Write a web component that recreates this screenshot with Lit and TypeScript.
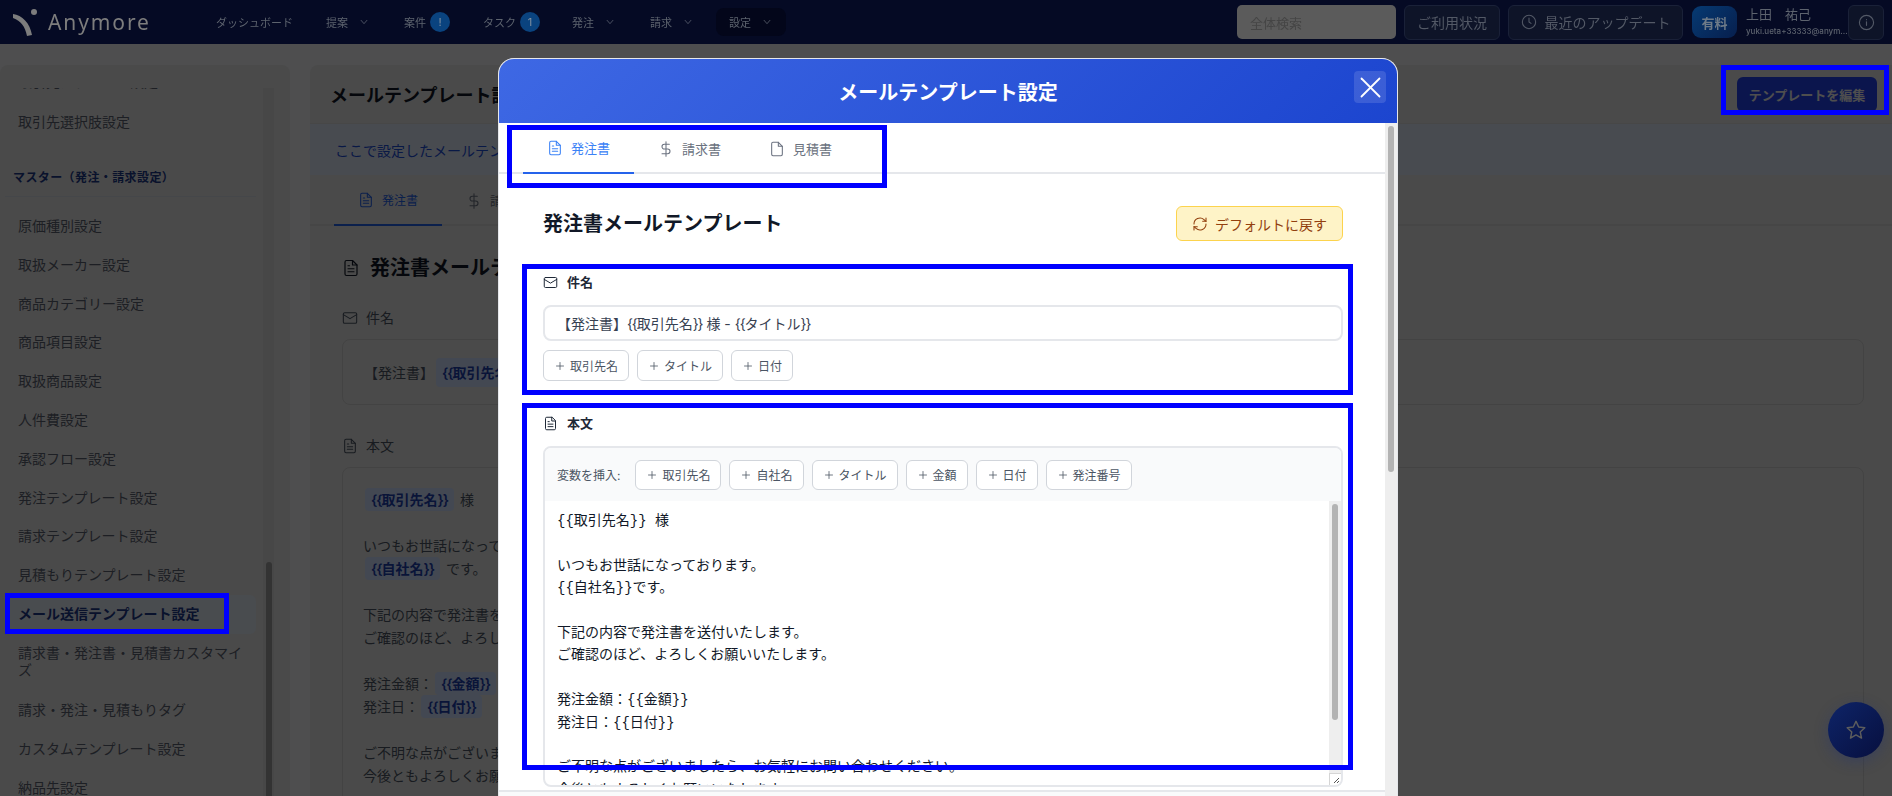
import { LitElement, html, css, svg } from "lit";
import { customElement } from "lit/decorators.js";

const ic = (size: number, body: unknown, cls = "") => html`<svg class=${cls} width=${size} height=${size} viewBox="0 0 24 24" fill="none" stroke="currentColor" stroke-width="1.6" stroke-linecap="round" stroke-linejoin="round">${body}</svg>`;
const fileText = svg`<path d="M14 2H6a2 2 0 0 0-2 2v16a2 2 0 0 0 2 2h12a2 2 0 0 0 2-2V8z"/><path d="M14 2v6h6"/><path d="M8 13h8"/><path d="M8 17h8"/><path d="M8 9h2"/>`;
const file = svg`<path d="M14 2H6a2 2 0 0 0-2 2v16a2 2 0 0 0 2 2h12a2 2 0 0 0 2-2V8z"/><path d="M14 2v6h6"/>`;
const dollar = svg`<path d="M12 1v22"/><path d="M17 5H9.5a3.5 3.5 0 0 0 0 7h5a3.5 3.5 0 0 1 0 7H6"/>`;
const mail = svg`<rect x="2" y="4" width="20" height="16" rx="2"/><path d="m22 7-10 6L2 7"/>`;
const plus = svg`<path d="M5 12h14"/><path d="M12 5v14"/>`;
const chevron = svg`<path d="m5 8 7 8 7-8"/>`;
const refresh = svg`<path d="M3 12a9 9 0 0 1 15-6.7L21 8"/><path d="M21 3v5h-5"/><path d="M21 12a9 9 0 0 1-15 6.7L3 16"/><path d="M8 16H3v5"/>`;
const x = svg`<path d="M4 4l16 16"/><path d="M20 4L4 20"/>`;
const clock = svg`<circle cx="12" cy="12" r="10"/><path d="M12 6v6l3 2"/>`;
const info = svg`<circle cx="12" cy="12" r="10"/><path d="M12 16v-5"/><path d="M12 8h.01"/>`;
const star = svg`<path d="M12 2.5l2.9 6.2 6.7.8-5 4.6 1.4 6.7-6-3.4-6 3.4 1.4-6.7-5-4.6 6.7-.8z"/>`;

const sideTop = ["原価種別設定", "取扱メーカー設定", "商品カテゴリー設定", "商品項目設定", "取扱商品設定", "人件費設定", "承認フロー設定", "発注テンプレート設定", "請求テンプレート設定", "見積もりテンプレート設定"];
const sideBottom = ["請求・発注・見積もりタグ", "カスタムテンプレート設定", "納品先設定"];
const subjectVars = ["取引先名", "タイトル", "日付"];
const bodyVars = ["取引先名", "自社名", "タイトル", "金額", "日付", "発注番号"];
const editorText = `{{取引先名}} 様

いつもお世話になっております。
{{自社名}}です。

下記の内容で発注書を送付いたします。
ご確認のほど、よろしくお願いいたします。

発注金額：{{金額}}
発注日：{{日付}}

ご不明な点がございましたら、お気軽にお問い合わせください。
今後ともよろしくお願いいたします。

{{自社名}}
`;

const v = (name: string) => html`<span class="br">{{</span>${name}<span class="br">}}</span>`;
const tok = (name: string) => html`<span class="tok">${v(name)}</span>`;

@customElement("app-root")
export class AppRoot extends LitElement {
  static styles = css`
    :host { display: block; position: relative; width: 100%; height: 796px; overflow: hidden; background: #f1f2f6; font-family: Inter, "Noto Sans CJK JP", sans-serif; color: #374151; }
    svg { display: block; flex: none; }
    .br { letter-spacing: -1.1px; }
    .topbar { height: 44px; background: #050a24; display: flex; align-items: center; color: #5d636e; font-size: 11px; filter: blur(0.4px); position: relative; z-index: 3; }
    .logo { display: flex; align-items: center; width: 216px; padding-left: 13px; box-sizing: border-box; flex: none; }
    .logo-text { font-size: 21px; letter-spacing: 1.9px; color: #7d7d7d; margin-left: 9px; font-family: "Noto Sans", sans-serif; }
    .nav { display: flex; align-items: center; height: 28px; flex: none; }
    .nav-gap { display: flex; align-items: center; gap: 4px; }
    .nav-badge { width: 20px; height: 20px; border-radius: 50%; background: #0a437f; color: #8090a0; display: flex; align-items: center; justify-content: center; font-size: 11px; }
    .nav-chev { margin-left: 11px; color: #6d737e; }
    .n1 { width: 110px; } .n2 { width: 78px; } .n3 { width: 79px; } .n4 { width: 89px; } .n5 { width: 78px; } .n6 { width: 66px; }
    .n7 { background: #03061a; border-radius: 8px; padding: 0 13px; width: 70px; box-sizing: border-box; }
    .right { display: flex; align-items: center; margin-left: auto; font-size: 13px; }
    .search { width: 159px; height: 34px; background: #5b5b5b; border-radius: 5px; box-sizing: border-box; padding-left: 13px; display: flex; align-items: center; color: #454545; margin-right: 8px; }
    .tbtn { height: 35px; border: 1px solid #1a2138; background: #0e1428; border-radius: 6px; display: flex; align-items: center; justify-content: center; box-sizing: border-box; gap: 8px; color: #535966; }
    .usage { width: 96px; font-size: 14px; margin-right: 8px; }
    .update { width: 175px; font-size: 14px; margin-right: 9px; }
    .plan { width: 45px; height: 32px; border-radius: 9px; background: linear-gradient(135deg, #063a72, #071f4e); color: #6d7a88; display: flex; align-items: center; justify-content: center; font-weight: 700; margin-right: 9px; }
    .user { width: 102px; display: flex; flex-direction: column; gap: 4px; color: #5d636e; }
    .uname { font-size: 13px; line-height: 16px; margin-top: -3px; }
    .umail { font-size: 8px; line-height: 10px; font-weight: 500; }
    .infob { width: 36px; margin-right: 8px; }

    .page { display: flex; height: 752px; padding-top: 21px; box-sizing: border-box; }
    .side { width: 290px; flex: none; background: #e6e6e6; border-radius: 8px 8px 0 0; padding: 23px 16px 0 5px; box-sizing: border-box; display: flex; gap: 7px; overflow: hidden; }
    .list { width: 251px; flex: none; overflow: hidden; font-size: 14px; color: #5b6270; }
    .item { padding: 11px 13px; line-height: 16.8px; }
    .item.clip { margin-top: -25.5px; padding-bottom: 12.5px; }
    .item.wrap { padding: 11px 13px 13px; }
    .item.active { background: #e4ebf5; color: #1e3a8a; font-weight: 700; border-radius: 6px; }
    .sec { margin: 25.5px 0 10px; font-size: 12px; letter-spacing: 0.4px; font-weight: 700; color: #1e3a8a; line-height: 21px; padding: 0 8px 8px; border-bottom: 1px solid #d5dbe5; }
    .strack { width: 11px; flex: none; background: #dcdcdc; padding: 474px 2px 0 3px; box-sizing: border-box; }
    .sthumb { height: 400px; background: #a0a0a0; border-radius: 3px; }
    .main { flex: 1; margin-left: 20px; background: #e6e6e6; border-radius: 8px 0 0 0; min-width: 0; }
    .mhead { height: 59px; display: flex; align-items: center; justify-content: space-between; padding: 0 15px 0 20px; border-bottom: 1px solid #dcdcdc; box-sizing: border-box; }
    .mtitle { font-size: 18px; font-weight: 700; color: #111827; }
    .edit { width: 140px; height: 35px; border-radius: 6px; background: #2242f0; display: flex; align-items: center; justify-content: center; color: #f2f2f2; font-size: 13px; font-weight: 600; }
    .band { height: 51px; background: #dfe9f8; display: flex; align-items: center; padding-left: 25px; color: #1d4ed8; font-size: 14px; }
    .mtabs { display: flex; padding-left: 24px; height: 51px; border-bottom: 2px solid #d8d8d8; box-sizing: border-box; }
    .mtab { display: flex; align-items: center; gap: 8px; padding: 0 24px; font-size: 12px; height: 51px; box-sizing: border-box; color: #6b7280; }
    .mtab.on { color: #2563eb; border-bottom: 2px solid #2563eb; }
    .content { padding: 28px 28px 0 32px; }
    .h { display: flex; align-items: center; gap: 10px; font-size: 20px; font-weight: 700; line-height: 28px; color: #111827; margin-bottom: 26px; }
    .lab { display: flex; align-items: center; gap: 8px; font-size: 14px; line-height: 20px; margin-bottom: 11px; color: #4b5563; }
    .box { border: 1px solid #d0d0d0; border-radius: 8px; padding: 20px 20px; box-sizing: border-box; font-size: 14px; line-height: 23px; color: #4b5563; }
    .box.subj { height: 66px; margin-bottom: 31px; display: flex; align-items: center; padding-left: 21px; white-space: pre; }
    .box.bodyb { height: 400px; }
    .tok { background: #cfe0ff; color: #1e40af; font-weight: 600; padding: 3px 6px; border-radius: 4px; margin: 0 2px; }
    .box p { margin: 0 0 23px; }

    .overlay { position: absolute; inset: 0; background: rgba(0,0,0,0.68); backdrop-filter: blur(0.5px); z-index: 2; }
    .fab { position: absolute; left: 1828px; top: 702px; width: 56px; height: 56px; border-radius: 50%; background: linear-gradient(135deg, #0e2468, #070f3e); color: #5d5d5d; display: flex; align-items: center; justify-content: center; z-index: 3; box-shadow: 0 4px 14px rgba(30,50,120,0.35); }

    .modal { position: absolute; left: 498px; top: 58px; width: 900px; height: 738px; background: #fff; border-radius: 16px 16px 0 0; z-index: 4; display: flex; flex-direction: column; overflow: hidden; border: 1px solid #e5e7eb; border-bottom: 0; box-sizing: border-box; }
    .mh { height: 64px; flex: none; background: linear-gradient(135deg, #3e68e4, #1c45cf); color: #fff; display: flex; align-items: center; justify-content: center; position: relative; font-size: 20px; font-weight: 600; }
    .close { position: absolute; right: 11px; top: 12px; width: 32px; height: 32px; background: rgba(255,255,255,0.13); border-radius: 4px; display: flex; align-items: center; justify-content: center; }
    .mbody { flex: 1; display: flex; min-height: 0; }
    .mcol { flex: 1; min-width: 0; display: flex; flex-direction: column; }
    .mscroll { flex: 1; min-height: 0; overflow: hidden; }
    .vtrack { width: 12px; flex: none; background: #eeeeee; padding: 3px 3px 0; box-sizing: border-box; }
    .vthumb { background: #b3b3b3; border-radius: 3px; }
    .vthumb.outer { height: 346px; }
    .vthumb.inner { height: 216px; }
    .tabs { display: flex; padding-left: 24px; height: 51px; border-bottom: 2px solid #e5e7eb; box-sizing: border-box; }
    .tab { display: flex; align-items: center; gap: 8px; padding: 0 24px; height: 51px; box-sizing: border-box; font-size: 13px; color: #6b7280; }
    .tab.on { color: #3b82f6; border-bottom: 2px solid #2563eb; }
    .pad { padding: 32px 42px 0 44px; }
    .row { display: flex; align-items: center; justify-content: space-between; margin-bottom: 31px; }
    .row h2 { margin: 0; font-size: 20px; font-weight: 700; color: #111827; line-height: 32px; }
    .def { height: 35px; width: 167px; background: #fef3c7; border: 1px solid #fcd34d; border-radius: 6px; box-sizing: border-box; display: flex; align-items: center; justify-content: center; gap: 7px; color: #92400e; font-size: 14px; }
    .flabel { display: flex; align-items: center; gap: 9px; font-size: 13px; font-weight: 700; color: #1f2937; line-height: 20px; margin-bottom: 13px; }
    .input { height: 36px; border: 2px solid #e5e7eb; border-radius: 8px; box-sizing: border-box; display: flex; align-items: center; padding-left: 12px; font-size: 14px; color: #374151; margin-bottom: 9px; white-space: pre; }
    .chips { display: flex; gap: 8px; align-items: center; }
    .chip { height: 31px; border: 1px solid #d1d5db; border-radius: 6px; box-sizing: border-box; display: flex; align-items: center; gap: 4px; padding: 0 10px; background: #fff; font-size: 12px; color: #4b5563; }
    .first { margin-bottom: 32px; }
    .editor { border: 2px solid #e5e7eb; border-radius: 8px; height: 341px; box-sizing: border-box; overflow: hidden; position: relative; }
    .toolbar { height: 53px; background: #f9fafb; display: flex; align-items: center; gap: 15px; padding-left: 12px; box-sizing: border-box; }
    .tlabel { font-size: 12px; color: #4b5563; }
    .toolbar .chip { height: 30px; }
    .earea { display: flex; height: 284px; }
    .editor-text { flex: 1; min-width: 0; overflow: hidden; box-sizing: border-box; padding: 9px 12px 0; margin: 0; white-space: pre-wrap; font-family: "Liberation Mono", "Noto Sans CJK JP", monospace; font-size: 14px; line-height: 22.4px; color: #111827; }
    .grip { position: absolute; right: 0; bottom: 0; width: 12px; height: 12px; background: #fff; border: 1px solid #d5d5d5; border-width: 1px 0 0 1px; box-sizing: border-box; color: #555; }
    .foot { flex: none; height: 6px; background: #f9fafb; border-top: 2px solid #e5e7eb; box-sizing: border-box; }

    .mark { position: absolute; border: 5px solid #0000ff; box-sizing: border-box; z-index: 5; pointer-events: none; }
    .m1 { left: 5px; top: 593px; width: 224px; height: 41px; }
    .m2 { left: 1721px; top: 65px; width: 168px; height: 50px; }
    .m3 { left: 507px; top: 125px; width: 380px; height: 63px; }
    .m4 { left: 522px; top: 264px; width: 831px; height: 131px; }
    .m5 { left: 522px; top: 403px; width: 831px; height: 367px; }
  `;

  private chip(t: string) {
    return html`<div class="chip">${ic(12, plus)}<span>${t}</span></div>`;
  }

  render() {
    return html`
      <header class="topbar">
        <div class="logo">
          <svg width="26" height="28" viewBox="0 0 26 28"><path d="M0 6c9 1 17 9 19 21l-5 1C12 18 8 13 0 10z" fill="#7d7d7d"/><circle cx="21" cy="4" r="3" fill="#7d7d7d"/></svg>
          <span class="logo-text">Anymore</span>
        </div>
        <div class="nav n1">ダッシュボード</div>
        <div class="nav n2">提案<span class="nav-chev">${ic(10, chevron)}</span></div>
        <div class="nav n3 nav-gap">案件<span class="nav-badge">!</span></div>
        <div class="nav n4 nav-gap">タスク<span class="nav-badge">1</span></div>
        <div class="nav n5">発注<span class="nav-chev">${ic(10, chevron)}</span></div>
        <div class="nav n6">請求<span class="nav-chev">${ic(10, chevron)}</span></div>
        <div class="nav n7">設定<span class="nav-chev">${ic(10, chevron)}</span></div>
        <div class="right">
          <div class="search">全体検索</div>
          <div class="tbtn usage">ご利用状況</div>
          <div class="tbtn update">${ic(16, clock)}最近のアップデート</div>
          <div class="plan">有料</div>
          <div class="user"><div class="uname">上田　祐己</div><div class="umail">yuki.ueta+33333@anym...</div></div>
          <div class="tbtn infob">${ic(17, info)}</div>
        </div>
      </header>
      <div class="page">
        <aside class="side">
          <div class="list">
            <div class="item clip">取引先カテゴリー設定</div>
            <div class="item">取引先選択肢設定</div>
            <div class="sec">マスター（発注・請求設定）</div>
            ${sideTop.map((s) => html`<div class="item">${s}</div>`)}
            <div class="item active">メール送信テンプレート設定</div>
            <div class="item wrap">請求書・発注書・見積書カスタマイズ</div>
            ${sideBottom.map((s) => html`<div class="item">${s}</div>`)}
          </div>
          <div class="strack"><div class="sthumb"></div></div>
        </aside>
        <main class="main">
          <div class="mhead"><div class="mtitle">メールテンプレート設定</div><div class="edit">テンプレートを編集</div></div>
          <div class="band">ここで設定したメールテンプレートは、各書類の送信時に使用されます。</div>
          <div class="mtabs">
            <div class="mtab on">${ic(16, fileText)}発注書</div>
            <div class="mtab">${ic(16, dollar)}請求書</div>
            <div class="mtab">${ic(16, file)}見積書</div>
          </div>
          <div class="content">
            <div class="h">${ic(18, fileText)}発注書メールテンプレート</div>
            <div class="lab">${ic(16, mail)}件名</div>
            <div class="box subj">【発注書】${tok("取引先名")} 様 - ${tok("タイトル")}</div>
            <div class="lab">${ic(16, fileText)}本文</div>
            <div class="box bodyb">
              <p>${tok("取引先名")} 様</p>
              <p>いつもお世話になっております。<br>${tok("自社名")} です。</p>
              <p>下記の内容で発注書を送付いたします。<br>ご確認のほど、よろしくお願いいたします。</p>
              <p>発注金額：${tok("金額")}<br>発注日：${tok("日付")}</p>
              <p>ご不明な点がございましたら、お気軽にお問い合わせください。<br>今後ともよろしくお願いいたします。</p>
            </div>
          </div>
        </main>
      </div>
      <div class="overlay"></div>
      <div class="fab">${ic(22, star)}</div>

      <section class="modal">
        <div class="mh">メールテンプレート設定<div class="close">${ic(27, x)}</div></div>
        <div class="mbody">
          <div class="mcol">
            <div class="mscroll">
              <div class="tabs">
                <div class="tab on">${ic(16, fileText)}発注書</div>
                <div class="tab">${ic(16, dollar)}請求書</div>
                <div class="tab">${ic(16, file)}見積書</div>
              </div>
              <div class="pad">
                <div class="row"><h2>発注書メールテンプレート</h2><div class="def">${ic(16, refresh)}デフォルトに戻す</div></div>
                <div class="first">
                  <div class="flabel">${ic(15, mail)}件名</div>
                  <div class="input">【発注書】${v("取引先名")} 様 - ${v("タイトル")}</div>
                  <div class="chips">${subjectVars.map((n) => this.chip(n))}</div>
                </div>
                <div class="flabel">${ic(15, fileText)}本文</div>
                <div class="editor">
                  <div class="toolbar"><span class="tlabel">変数を挿入:</span><div class="chips">${bodyVars.map((n) => this.chip(n))}</div></div>
                  <div class="earea">
                    <pre class="editor-text">${editorText}</pre>
                    <div class="vtrack"><div class="vthumb inner"></div></div>
                  </div>
                  <div class="grip"><svg width="10" height="10" viewBox="0 0 10 10" stroke="currentColor" fill="none"><path d="M9 4L4 9M9 7L7 9"/></svg></div>
                </div>
              </div>
            </div>
            <div class="foot"></div>
          </div>
          <div class="vtrack"><div class="vthumb outer"></div></div>
        </div>
      </section>

      <div class="mark m1"></div><div class="mark m2"></div><div class="mark m3"></div><div class="mark m4"></div><div class="mark m5"></div>
    `;
  }
}
